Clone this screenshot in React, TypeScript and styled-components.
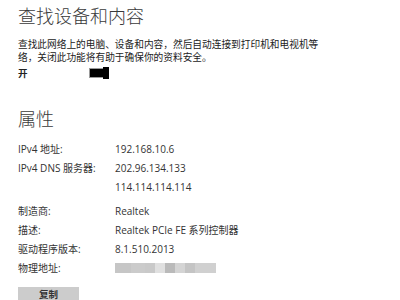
import React from "react";
import styled, { createGlobalStyle } from "styled-components";

const Global = createGlobalStyle`
  html, body { margin: 0; padding: 0; background: #ffffff; }
  body { font-family: "Open Sans", "Noto Sans CJK SC", sans-serif; color: #333; }
`;

const Page = styled.div`
  width: 400px;
  height: 300px;
  overflow: hidden;
  padding-left: 18px;
  box-sizing: border-box;
`;

const Heading = styled.h1<{ $top: number }>`
  margin: ${(p) => p.$top}px 0 0 0;
  font-family: "Noto Sans CJK SC", sans-serif;
  font-weight: 300;
  font-size: 18px;
  line-height: 22px;
  color: #3a3a3a;
`;

const Paragraph = styled.p`
  margin: 12px 0 0 0;
  width: 314px;
  font-family: "Noto Sans CJK SC", sans-serif;
  font-size: 9.7px;
  line-height: 13px;
  color: #222;
`;

const ToggleRow = styled.div`
  display: flex;
  align-items: center;
  margin-top: 2px;
  height: 13px;
`;

const ToggleLabel = styled.span`
  width: 71px;
  font-family: "Noto Sans CJK SC", sans-serif;
  font-weight: 700;
  font-size: 9.5px;
  color: #222;
`;

const Toggle = styled.div`
  position: relative;
  width: 18px;
  height: 8px;
  border: 1px solid #9a9a9a;
  background: #000;
`;

const Thumb = styled.div`
  position: absolute;
  right: -1px;
  top: -2px;
  width: 6px;
  height: 12px;
  background: #000;
`;

const Props = styled.div`
  margin-top: 10px;
  display: flex;
  flex-direction: column;
`;

const Row = styled.div<{ $gap?: number }>`
  display: grid;
  grid-template-columns: 97px 1fr;
  height: 19px;
  align-items: center;
  margin-top: ${(p) => p.$gap ?? 0}px;
  font-size: 10px;
  color: #333;
`;

const Label = styled.span`
  font-family: "Open Sans", "Noto Sans CJK SC", sans-serif;
`;

const Value = styled.span`
  font-family: "Open Sans", "Noto Sans CJK SC", sans-serif;
`;

const Blur = styled.div`
  display: flex;
  justify-self: start;
  width: 101px;
  height: 10px;
`;

const BlurCell = styled.div<{ $c: string; $w: number }>`
  flex: 0 0 ${(p) => p.$w}px;
  height: 10px;
  background: ${(p) => p.$c};
`;

const Button = styled.button`
  margin-top: 10px;
  width: 61px;
  height: 22px;
  border: none;
  background: #cccccc;
  font-family: "Noto Sans CJK SC", sans-serif;
  font-weight: 700;
  font-size: 9.5px;
  line-height: 11px;
  color: #333;
  padding: 2px 0 0 0;
  display: flex;
  justify-content: center;
  align-items: flex-start;
`;

const blur: [string, number][] = [
  ["#c6c6c6", 16],
  ["#cbcbcb", 14],
  ["#c9c9c9", 10],
  ["#e0e0e0", 10],
  ["#bababa", 10],
  ["#d4d4d4", 10],
  ["#c4c4c4", 10],
  ["#d0d0d0", 21],
];

export default function App() {
  return (
    <Page>
      <Global />
      <Heading $top={4}>查找设备和内容</Heading>
      <Paragraph>
        查找此网络上的电脑、设备和内容，然后自动连接到打印机和电视机等络，关闭此功能将有助于确保你的资料安全。
      </Paragraph>
      <ToggleRow>
        <ToggleLabel>开</ToggleLabel>
        <Toggle>
          <Thumb />
        </Toggle>
      </ToggleRow>
      <Heading $top={28}>属性</Heading>
      <Props>
        <Row>
          <Label>IPv4 地址:</Label>
          <Value>192.168.10.6</Value>
        </Row>
        <Row>
          <Label>IPv4 DNS 服务器:</Label>
          <Value>202.96.134.133</Value>
        </Row>
        <Row>
          <Label />
          <Value>114.114.114.114</Value>
        </Row>
        <Row $gap={5}>
          <Label>制造商:</Label>
          <Value>Realtek</Value>
        </Row>
        <Row>
          <Label>描述:</Label>
          <Value>Realtek PCIe FE 系列控制器</Value>
        </Row>
        <Row>
          <Label>驱动程序版本:</Label>
          <Value>8.1.510.2013</Value>
        </Row>
        <Row>
          <Label>物理地址:</Label>
          <Blur>
            {blur.map(([c, w], i) => (
              <BlurCell key={i} $c={c} $w={w} />
            ))}
          </Blur>
        </Row>
      </Props>
      <Button>复制</Button>
    </Page>
  );
}
